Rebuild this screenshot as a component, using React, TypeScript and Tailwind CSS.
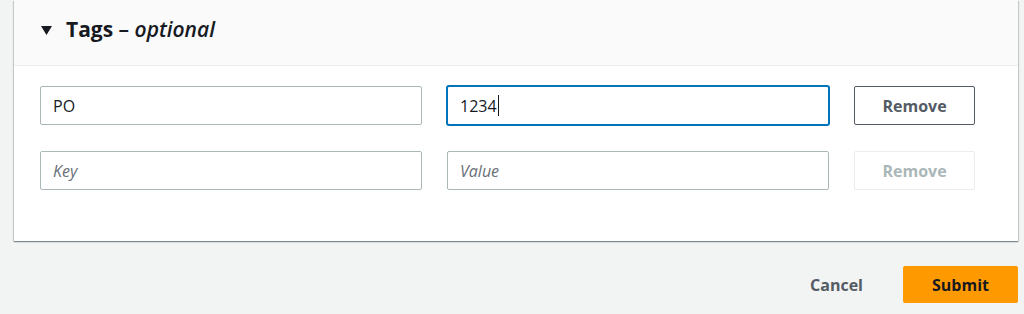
import React from 'react';

const font = { fontFamily: '"Open Sans", "Noto Sans", sans-serif' };

function TextBox({ value, placeholder }: { value?: string; placeholder?: string }) {
  return (
    <div className="flex h-[39px] flex-1 items-center rounded-[2px] border border-[#aab7b8] bg-white px-3 text-[16px]">
      {value ? (
        <span className="text-[#16191f]">{value}</span>
      ) : (
        <span className="italic text-[#687078]">{placeholder}</span>
      )}
    </div>
  );
}

export default function App() {
  return (
    <div className="h-[314px] w-[1024px] overflow-hidden bg-[#f2f3f3]" style={font}>
      {/* Tags card */}
      <div className="ml-[14px] w-[1004px] bg-white shadow-[0_1px_1px_0_rgba(0,28,36,0.3),1px_1px_1px_0_rgba(0,28,36,0.15),-1px_1px_1px_0_rgba(0,28,36,0.15)]">
        <div className="flex h-[66px] items-center gap-[14px] border-b border-[#eaeded] bg-[#fafafa] pb-[6px] pl-[27px]">
          <svg width="11" height="9" viewBox="0 0 11 9" className="mt-[2px]">
            <path d="M0 0h11L5.5 9z" fill="#16191f" />
          </svg>
          <h2 className="text-[21px] font-bold text-[#16191f]">
            Tags <span className="font-semibold">–</span> <em className="font-semibold">optional</em>
          </h2>
        </div>

        <div className="flex flex-col gap-[26px] pb-[51px] pl-[26px] pr-[43px] pt-[20px]">
          <div className="flex items-center gap-[25px]">
            <TextBox value="PO" />
            <div className="flex h-[39px] flex-1 items-center rounded-[2px] border border-[#0073bb] bg-white px-3 text-[16px] shadow-[0_0_0_1px_#0073bb]">
              <span className="text-[#16191f]">1234</span>
              <span className="ml-[1px] h-[21px] w-px bg-[#16191f]" />
            </div>
            <button className="h-[39px] w-[121px] rounded-[2px] border border-[#545b64] bg-white text-[16px] font-bold text-[#545b64]">
              Remove
            </button>
          </div>
          <div className="flex items-center gap-[25px]">
            <TextBox placeholder="Key" />
            <TextBox placeholder="Value" />
            <button className="h-[39px] w-[121px] rounded-[2px] border border-[#eaeded] bg-white text-[16px] font-bold text-[#aab7b8]">
              Remove
            </button>
          </div>
        </div>
      </div>

      {/* Actions */}
      <div className="mt-[25px] flex w-[1018px] items-center justify-end gap-5">
        <button className="px-5 text-[16px] font-bold text-[#545b64]">Cancel</button>
        <button className="h-[37px] w-[115px] rounded-[2px] bg-[#ff9900] text-[16px] font-bold text-[#16191f]">
          Submit
        </button>
      </div>
    </div>
  );
}
